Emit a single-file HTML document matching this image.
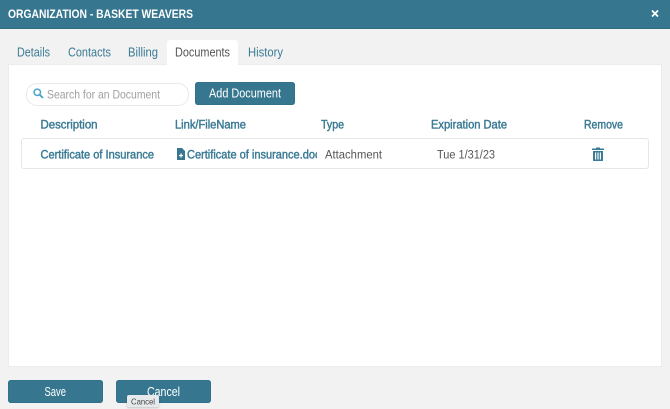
<!DOCTYPE html>
<html>
<head>
<meta charset="utf-8">
<style>
html,body{margin:0;padding:0}
body{width:670px;height:409px;overflow:hidden;background:#f2f2f2;position:relative}
#w{position:absolute;left:0;top:0;width:670px;height:409px;filter:blur(.3px)}
.a{position:absolute}
.btn{position:absolute;background:#36768f;border-radius:3px;box-shadow:inset 0 0 0 1px #33708a}
svg.t{position:absolute;left:0;top:0}
svg.t text{font-family:"Liberation Sans",sans-serif}
.tab{font-size:12.5px;fill:#3b7b94}
.h{font-size:12.2px;fill:#3b7b94;stroke:#3b7b94;stroke-width:.45px}
.g{font-size:12.2px;fill:#555}
.w{font-size:12.5px;fill:#fff}
</style>
</head>
<body>
<div id="w">
<div class="a" style="left:0;top:0;width:670px;height:28px;background:#36768f;border-bottom:1px solid #2f6a80"></div>
<svg class="a" style="left:651px;top:9px" width="8" height="9" viewBox="0 0 8 9"><path d="M1 1.5L7 7.5M7 1.5L1 7.5" stroke="#fff" stroke-width="1.8"/></svg>

<div class="a" style="left:167px;top:40px;width:71px;height:26px;background:#fff;border-radius:3px 3px 0 0"></div>
<div class="a" style="left:9px;top:65px;width:652px;height:301px;background:#fff;box-shadow:0 0 0 1px #ececec"></div>
<div class="a" style="left:167px;top:62px;width:71px;height:5px;background:#fff"></div>

<div class="a" style="left:26px;top:83px;width:161px;height:21px;border:1px solid #e8e8e8;border-radius:11px;background:#fff"></div>
<svg class="a" style="left:33px;top:88px" width="11" height="11" viewBox="0 0 11 11"><circle cx="4.3" cy="4.3" r="3.2" fill="none" stroke="#4fa6c4" stroke-width="1.5"/><path d="M6.8 6.8L10 10" stroke="#4fa6c4" stroke-width="1.9"/></svg>

<div class="btn" style="left:195px;top:82px;width:100px;height:23px"></div>

<div class="a" style="left:21px;top:138px;width:626px;height:29px;border:1px solid #e6e6e6;border-radius:3px;background:#fff"></div>
<svg class="a" style="left:177px;top:148px" width="8" height="12" viewBox="0 0 8 12"><path d="M0 0H5L8 3V12H0Z" fill="#36768f"/><path d="M4 5.5V9.5M2 7.5H6" stroke="#fff" stroke-width="1.3"/></svg>
<svg class="a" style="left:592px;top:147px" width="12" height="14" viewBox="0 0 12 14"><path d="M4 1.5V.5H8V1.5H12V3H0V1.5Z" fill="#3b7b94"/><path fill-rule="evenodd" d="M1 4H11V14H1ZM3 5.5V12.5H4.2V5.5ZM5.4 5.5V12.5H6.6V5.5ZM7.8 5.5V12.5H9V5.5Z" fill="#3b7b94"/></svg>

<div class="btn" style="left:8px;top:380px;width:95px;height:23px"></div>
<div class="btn" style="left:116px;top:380px;width:95px;height:23px"></div>

<svg class="t" width="670" height="409" viewBox="0 0 670 409">
<defs><clipPath id="c"><rect x="187" y="140" width="130" height="26"/></clipPath></defs>
<text x="8" y="18" textLength="185" lengthAdjust="spacingAndGlyphs" font-size="12" font-weight="bold" fill="#fff">ORGANIZATION - BASKET WEAVERS</text>
<text class="tab" x="17" y="56.5" textLength="33" lengthAdjust="spacingAndGlyphs">Details</text>
<text class="tab" x="68" y="56.5" textLength="43" lengthAdjust="spacingAndGlyphs">Contacts</text>
<text class="tab" x="128" y="56.5" textLength="30" lengthAdjust="spacingAndGlyphs">Billing</text>
<text class="tab" x="175" y="56.5" textLength="55" lengthAdjust="spacingAndGlyphs" style="fill:#555">Documents</text>
<text class="tab" x="248" y="56.5" textLength="35" lengthAdjust="spacingAndGlyphs">History</text>
<text x="47" y="98.5" textLength="113" lengthAdjust="spacingAndGlyphs" font-size="12.2" fill="#a0a0a0">Search for an Document</text>
<text class="w" x="209" y="97.5" textLength="72" lengthAdjust="spacingAndGlyphs">Add Document</text>
<text class="h" x="40.5" y="128.5" textLength="57" lengthAdjust="spacingAndGlyphs">Description</text>
<text class="h" x="175" y="128.5" textLength="71" lengthAdjust="spacingAndGlyphs">Link/FileName</text>
<text class="h" x="321" y="128.5" textLength="23" lengthAdjust="spacingAndGlyphs">Type</text>
<text class="h" x="431" y="128.5" textLength="76" lengthAdjust="spacingAndGlyphs">Expiration Date</text>
<text class="h" x="584" y="128.5" textLength="39" lengthAdjust="spacingAndGlyphs">Remove</text>
<text class="h" x="40.5" y="158.5" textLength="113.5" lengthAdjust="spacingAndGlyphs">Certificate of Insurance</text>
<g clip-path="url(#c)"><text class="h" x="187" y="158.5" textLength="139" lengthAdjust="spacingAndGlyphs">Certificate of insurance.docx</text></g>
<text class="g" x="325" y="158.5" textLength="57" lengthAdjust="spacingAndGlyphs">Attachment</text>
<text class="g" x="437" y="158.5" textLength="58" lengthAdjust="spacingAndGlyphs">Tue 1/31/23</text>
<text class="w" x="44.5" y="396" textLength="21.5" lengthAdjust="spacingAndGlyphs">Save</text>
<text class="w" x="147" y="396" textLength="33" lengthAdjust="spacingAndGlyphs">Cancel</text>
</svg>

<div class="a" style="left:127px;top:395px;width:32px;height:12px;background:#e6eaec;border-radius:2px;box-shadow:0 1px 2px rgba(0,0,0,.2)"></div>
<svg class="t" width="670" height="409" viewBox="0 0 670 409"><text x="131" y="404.5" textLength="24" lengthAdjust="spacingAndGlyphs" font-size="8.5" fill="#444">Cancel</text></svg>
</div>
</body>
</html>
